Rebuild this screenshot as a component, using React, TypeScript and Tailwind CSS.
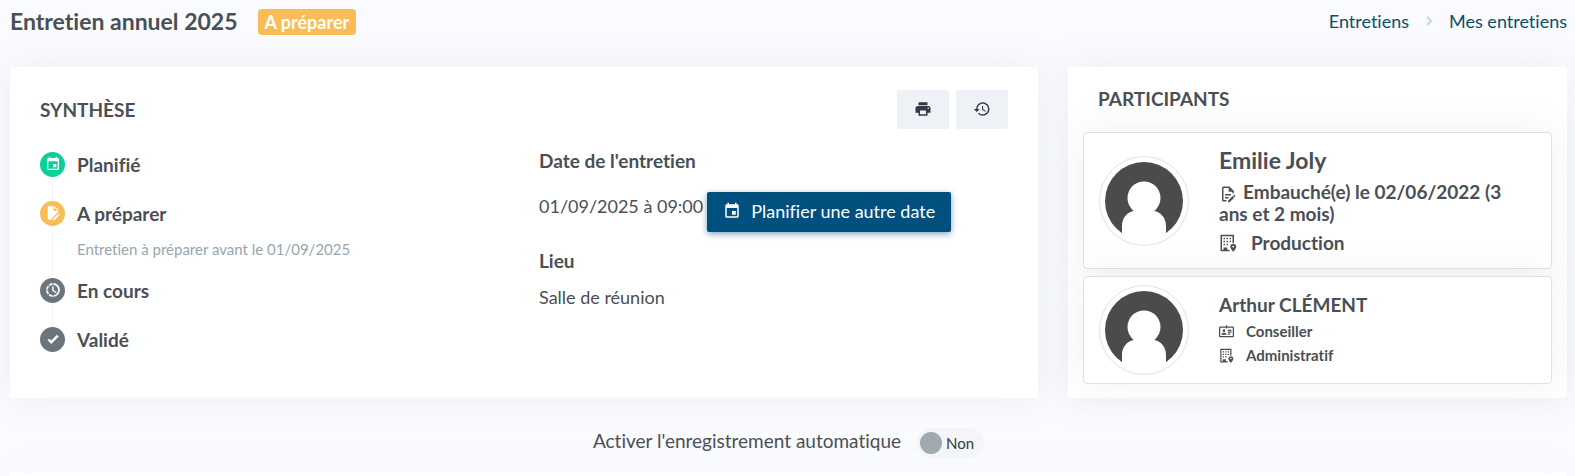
import { useState } from 'react';
import type { ReactNode } from 'react';
import { MdEvent, MdHistory, MdPrint } from 'react-icons/md';

type IconProps = { className?: string };

function Glyph({ d, className }: IconProps & { d: string }) {
  return (
    <svg className={className} viewBox="0 0 24 24" fill="currentColor" aria-hidden="true">
      <path fillRule="evenodd" d={d} />
    </svg>
  );
}

const PENCIL =
  'M20.2 13c.1 0 .3.1.4.2l1.3 1.3c.2.2.2.6 0 .8l-1 1-2.1-2.1 1-1c.1-.1.2-.2.4-.2M20.2 16.9 14.1 23H12v-2.1l6.1-6.1z';

const FileEdit = ({ className }: IconProps) => (
  <Glyph
    className={className}
    d={'M6 2a2 2 0 0 0-2 2v16a2 2 0 0 0 2 2h4v-1.900L20 10.100V8l-6-6zm7 1.500L18.500 9H13z' + PENCIL}
  />
);

const FileEditOutline = ({ className }: IconProps) => (
  <Glyph
    className={className}
    d={
      'M8 12h8v2H8zM10 20H6V4h7v5h5v3.100l2-2V8l-6-6H6a2 2 0 0 0-2 2v16a2 2 0 0 0 2 2h4zM8 18h4.100l.9-.9V16H8z' +
      PENCIL
    }
  />
);

const ProgressClock = ({ className }: IconProps) => (
  <svg
    className={className}
    viewBox="0 0 24 24"
    fill="currentColor"
    stroke="currentColor"
    strokeWidth="0.7"
    aria-hidden="true"
  >
    <path d="M13,2.03V2.05L13,4.05C17.39,4.59 20.5,8.58 19.96,12.97C19.5,16.61 16.64,19.5 13,19.93V21.93C18.5,21.38 22.5,16.5 21.95,11C21.5,6.25 17.73,2.5 13,2.03M11,2.06C9.05,2.25 7.19,3 5.67,4.26L7.1,5.74C8.22,4.84 9.57,4.26 11,4.06V2.06M4.26,5.67C3,7.19 2.25,9.04 2.05,11H4.05C4.24,9.58 4.8,8.23 5.69,7.1L4.26,5.67M2.06,13C2.26,14.96 3.03,16.81 4.27,18.33L5.69,16.9C4.81,15.77 4.24,14.42 4.06,13H2.06M7.1,18.37L5.67,19.74C7.18,21 9.04,21.79 11,22V20C9.58,19.82 8.23,19.25 7.1,18.37M12.5,7V12.25L17,14.92L16.25,16.15L11,13V7H12.5Z" />
  </svg>
);

const CheckBold = ({ className }: IconProps) => (
  <Glyph
    className={className}
    d="M9,20.42L2.79,14.21L5.62,11.38L9,14.77L18.88,4.88L21.71,7.71L9,20.42Z"
  />
);

const Building = ({ className }: IconProps) => (
  <Glyph
    className={className}
    d="M2 1h18v11h-2V3H4v18h2v-3h5v3h3v2H2zM6 5h2v2H6zM10 5h2v2h-2zM14 5h2v2h-2zM6 9h2v2H6zM10 9h2v2h-2zM14 9h2v2h-2zM6 13h2v2H6zM10 13h2v2h-2zM19 13c2.200 0 4 1.600 4 3.800 0 2.800-4 7.200-4 7.200s-4-4.400-4-7.200c0-2.200 1.800-3.800 4-3.800m0 2.500a1.300 1.300 0 1 0 0 2.600 1.300 1.300 0 0 0 0-2.600z"
  />
);

const IdCard = ({ className }: IconProps) => (
  <Glyph
    className={className}
    d="M11 2h2v2h9a2 2 0 0 1 2 2v13a2 2 0 0 1-2 2H2a2 2 0 0 1-2-2V6a2 2 0 0 1 2-2h9zM2 6v13h20V6h-9v1h-2V6zM14 9h6v2h-6zM14 12h6v2h-6zM14 15h4v2h-4zM8 8.500a2.200 2.200 0 1 1 0 4.400 2.200 2.200 0 0 1 0-4.400M4 17v-1c0-1.400 2.600-2.200 4-2.200s4 .8 4 2.200v1z"
  />
);

function Avatar() {
  return (
    <svg className="size-[90px] shrink-0" viewBox="0 0 90 90" role="img" aria-label="Avatar">
      <circle cx="45" cy="45" r="44.500" fill="#fff" />
      <circle cx="45" cy="45" r="39" fill="#4b4b4b" />
      <circle cx="45" cy="42" r="16.500" fill="#fff" />
      <path d="M23 86V70c0-8 5-14 12-15l3-1h14l3 1c7 1 12 7 12 15v16z" fill="#fff" />
      <circle cx="45" cy="45" r="44.500" fill="none" stroke="#dee2e6" />
    </svg>
  );
}

type Step = {
  label: string;
  color: string;
  icon: ReactNode;
  note?: string;
};

const steps: Step[] = [
  { label: 'Planifié', color: 'bg-[#0acf97]', icon: <MdEvent className="size-4" /> },
  {
    label: 'A préparer',
    color: 'bg-[#f9bc56]',
    icon: <FileEdit className="size-4" />,
    note: 'Entretien à préparer avant le 01/09/2025',
  },
  { label: 'En cours', color: 'bg-[#6c757d]', icon: <ProgressClock className="size-4" /> },
  { label: 'Validé', color: 'bg-[#6c757d]', icon: <CheckBold className="size-[14px]" /> },
];

function Timeline() {
  return (
    <ol>
      {steps.map((step, i) => (
        <li key={step.label} className="flex gap-3">
          <div className="flex flex-col items-center">
            <span
              className={`flex size-[25px] items-center justify-center rounded-full pb-0.5 text-white ${step.color}`}
            >
              {step.icon}
            </span>
            {i < steps.length - 1 && <span className="min-h-6 w-px flex-1 bg-[#f1f3fa]" />}
          </div>
          <div>
            <h3 className="text-[19px] leading-[25px] font-bold">{step.label}</h3>
            {step.note && (
              <p className="mt-[13px] mb-[19px] text-[15px] leading-5 text-[#98a6ad]">
                {step.note}
              </p>
            )}
          </div>
        </li>
      ))}
    </ol>
  );
}

function Summary() {
  return (
    <section className="col-span-8 rounded bg-white px-[30px] py-[23px] shadow-[0_0_35px_rgba(154,161,171,0.15)]">
      <div className="flex items-center justify-between">
        <h2 className="text-[19px] leading-5 font-bold">SYNTHÈSE</h2>
        <div className="flex gap-[7px] text-[#313a46]">
          <button
            type="button"
            aria-label="Imprimer"
            className="flex h-[39px] w-[52px] items-center justify-center rounded-xs bg-[#eef2f7] pb-0.5"
          >
            <MdPrint className="size-[18px]" />
          </button>
          <button
            type="button"
            aria-label="Historique"
            className="flex h-[39px] w-[52px] items-center justify-center rounded-xs bg-[#eef2f7] pb-0.5"
          >
            <MdHistory className="size-[18px]" />
          </button>
        </div>
      </div>

      <div className="mt-[23px] grid grid-cols-2 gap-[30px]">
        <Timeline />
        <div className="text-lg leading-5">
          <h3 className="text-[19px] leading-[18px] font-bold">Date de l&apos;entretien</h3>
          <div className="mt-[22px] flex items-start gap-1">
            <p className="mt-1 whitespace-nowrap">01/09/2025 à 09:00</p>
            <button
              type="button"
              className="flex h-10 items-center gap-[10px] rounded-xs bg-[#00507f] px-4 pb-0.5 whitespace-nowrap text-white shadow-[0_2px_6px_rgba(0,80,127,0.5)]"
            >
              <MdEvent className="size-[18px]" />
              Planifier une autre date
            </button>
          </div>
          <h3 className="mt-5 text-[19px] leading-[18px] font-bold">Lieu</h3>
          <p className="mt-[17px]">Salle de réunion</p>
        </div>
      </div>
    </section>
  );
}

function Participants() {
  return (
    <section className="col-span-4 rounded bg-white px-[15px] pt-[22px] pb-[14px] shadow-[0_0_35px_rgba(154,161,171,0.15)]">
      <h2 className="px-[15px] text-[19px] leading-5 font-bold">PARTICIPANTS</h2>
      <div className="mt-[23px] space-y-[7px]">
        <article className="flex items-center gap-[30px] rounded border border-[#dee2e6] bg-white py-[15px] pr-7 pl-[15px] shadow-[0_0_35px_rgba(154,161,171,0.15)]">
          <Avatar />
          <div className="text-[19px] leading-[21px] font-bold">
            <h3 className="text-[23px] leading-[25px]">Emilie Joly</h3>
            <p className="mt-2">
              <FileEditOutline className="mr-1.5 inline size-[18px] align-text-bottom" />
              Embauché(e) le 02/06/2022 (3 ans et 2 mois)
            </p>
            <p className="mt-2 flex items-center gap-[14px]">
              <Building className="size-[18px]" />
              Production
            </p>
          </div>
        </article>
        <article className="flex items-center gap-[30px] rounded border border-[#dee2e6] bg-white px-[15px] py-2 shadow-[0_0_35px_rgba(154,161,171,0.15)]">
          <Avatar />
          <div className="text-[15px] leading-6 font-bold">
            <h3 className="text-[19px] leading-6">Arthur CLÉMENT</h3>
            <p className="mt-0.5 flex items-center gap-3">
              <IdCard className="size-[15px]" />
              Conseiller
            </p>
            <p className="flex items-center gap-3">
              <Building className="size-[15px]" />
              Administratif
            </p>
          </div>
        </article>
      </div>
    </section>
  );
}

export default function App() {
  const [autoSave, setAutoSave] = useState(false);

  return (
    <div className="overflow-hidden bg-[#fafbfe] pr-2 pl-[10px] font-['Lato',sans-serif] text-[#4a4f55] [font-variant-ligatures:none]">
      <header className="flex items-start justify-between pt-[7px]">
        <h1 className="flex items-center gap-5 text-[23px] leading-7 font-bold">
          Entretien annuel 2025
          <span className="mt-0.5 rounded bg-[#f9bc56] px-[7px] text-lg leading-[26px] text-white">
            A préparer
          </span>
        </h1>
        <nav aria-label="Fil d'Ariane" className="flex items-center gap-4 text-lg text-[#0b4f6c]">
          <a href="#">Entretiens</a>
          <svg className="h-3 w-2 text-[#ced4da]" viewBox="0 0 8 12" fill="none" aria-hidden="true">
            <path d="M2 2l4 4-4 4" stroke="currentColor" strokeWidth="2" />
          </svg>
          <a href="#">Mes entretiens</a>
        </nav>
      </header>

      <main className="mt-8 grid grid-cols-12 gap-[30px]">
        <Summary />
        <Participants />
      </main>

      <div className="mt-[30px] flex items-start justify-center gap-4 text-[19px]">
        <label htmlFor="autosave" className="leading-[26px]">
          Activer l&apos;enregistrement automatique
        </label>
        <span className="relative flex h-[30px] w-[67px] items-center rounded-full bg-[#f3f5f9] pl-[3px] text-[15px] text-[#343a40]">
          <input
            id="autosave"
            type="checkbox"
            role="switch"
            checked={autoSave}
            onChange={(e) => setAutoSave(e.target.checked)}
            className="absolute inset-0 cursor-pointer appearance-none"
          />
          <span className="mr-1 size-[22px] rounded-full bg-[#a1a9b1]" />
          {autoSave ? 'Oui' : 'Non'}
        </span>
      </div>

      <section className="mt-[15px] h-1 rounded-t bg-white shadow-[0_0_35px_rgba(154,161,171,0.15)]" />
    </div>
  );
}
